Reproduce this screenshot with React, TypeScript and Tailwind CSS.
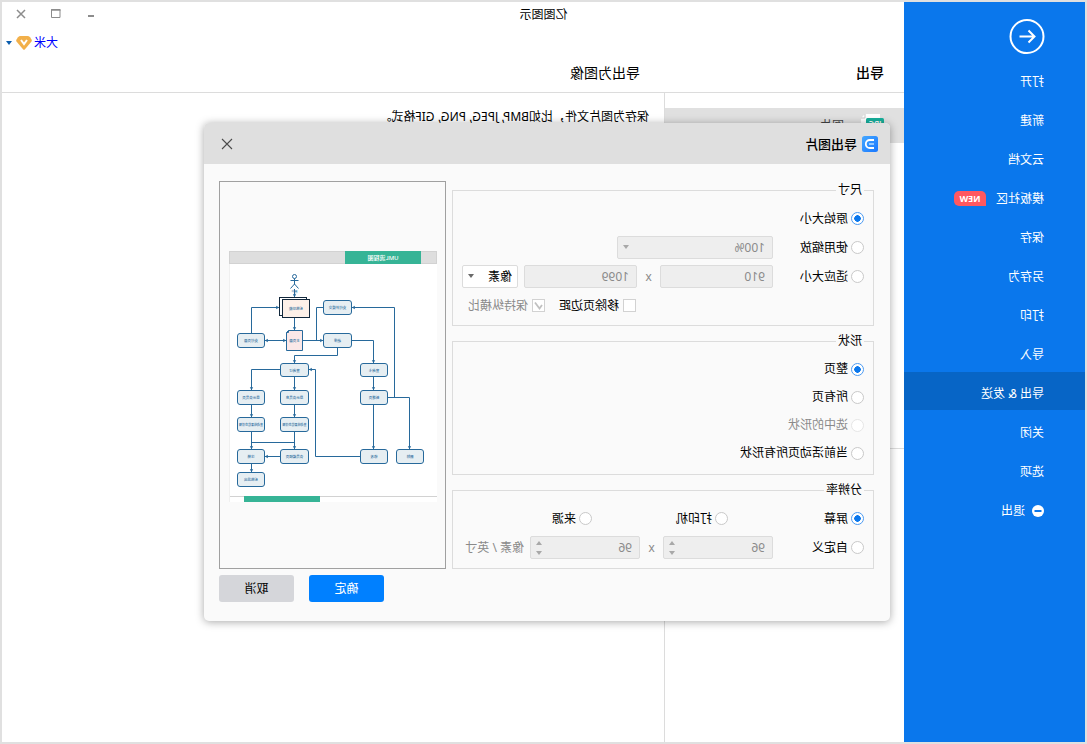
import type { ReactNode } from 'react'

type NavItem = { label: string; active?: boolean; badge?: string; exit?: boolean }

const navItems: NavItem[] = [
  { label: '打开' },
  { label: '新建' },
  { label: '云文档' },
  { label: '模板社区', badge: 'NEW' },
  { label: '保存' },
  { label: '另存为' },
  { label: '打印' },
  { label: '导入' },
  { label: '导出 & 发送', active: true },
  { label: '关闭' },
  { label: '选项' },
  { label: '退出', exit: true },
]

function Sidebar() {
  return (
    <nav className="w-[181px] shrink-0 bg-[#0a77ec] text-white">
      <button type="button" aria-label="返回" className="mt-[17px] ml-10 block size-9">
        <svg viewBox="0 0 36 36" className="size-9" fill="none" stroke="#fff" strokeWidth="2">
          <circle cx="18" cy="17.500" r="16.500" />
          <path d="M25.500 17.500H10.500M16.500 11.500l-6 6 6 6" />
        </svg>
      </button>
      <ul className="mt-[5px]">
        {navItems.map((item) => (
          <li key={item.label} className="h-[39px]">
            <a
              href="#"
              className={`flex h-[38px] items-center pt-[5px] pl-[41px] leading-4 ${item.active ? 'bg-[#0765c6]' : ''}`}
            >
              {item.exit && (
                <svg viewBox="0 0 12 12" className="mr-[7px] size-3">
                  <circle cx="6" cy="6" r="6" fill="#fff" />
                  <path d="M2.500 6h7" stroke="#0a77ec" strokeWidth="2" />
                </svg>
              )}
              {item.label}
              {item.badge && (
                <span className="ml-[10px] flex h-[15px] w-8 items-center justify-center rounded-[5px] rounded-bl-none bg-[#ff5860] text-[9px] font-bold">
                  {item.badge}
                </span>
              )}
            </a>
          </li>
        ))}
      </ul>
    </nav>
  )
}

function Caret({ className }: { className: string }) {
  return (
    <svg viewBox="0 0 6 4" className={`h-1 w-1.5 ${className}`}>
      <path d="M0 0h6L3 4z" fill="currentColor" />
    </svg>
  )
}

function TitleBar() {
  return (
    <div className="flex h-[26px] items-center">
      <h1 className="flex-1 text-center">亿图图示</h1>
      <div className="flex w-[181px] justify-end gap-[21px] pr-3 text-[#8c8c8c]">
        <button type="button" aria-label="最小化">
          <svg viewBox="0 0 14 14" className="size-3.5">
            <path d="M4 8h6" stroke="currentColor" strokeWidth="2" />
          </svg>
        </button>
        <button type="button" aria-label="最大化">
          <svg viewBox="0 0 14 14" className="size-3.5" fill="none" stroke="currentColor">
            <path d="M3 1.500h8.500v8H3z" />
            <path d="M2.500 2h9.500" strokeWidth="1.500" />
          </svg>
        </button>
        <button type="button" aria-label="关闭窗口">
          <svg viewBox="0 0 14 14" className="size-3.5" fill="none" stroke="currentColor" strokeWidth="1.500">
            <path d="M3 2l8 8M11 2l-8 8" />
          </svg>
        </button>
      </div>
    </div>
  )
}

function Radio({ name, label, checked, disabled }: { name: string; label: string; checked?: boolean; disabled?: boolean }) {
  return (
    <label className={`flex items-center gap-[3px] whitespace-nowrap ${disabled ? 'text-[#8a8a8a]' : ''}`}>
      <input
        type="radio"
        name={name}
        defaultChecked={checked}
        disabled={disabled}
        className="size-[13px] shrink-0 appearance-none rounded-full border border-[#c9c9c9] bg-white checked:border-[#4c9bf2] checked:bg-[radial-gradient(circle,#0a77ec_0_3px,#fff_3.5px)] disabled:border-[#e6e6e6]"
      />
      {label}
    </label>
  )
}

function NumberField({ label, value, className, stepper }: { label: string; value: string; className: string; stepper?: boolean }) {
  return (
    <div className={`relative shrink-0 ${className}`}>
      <input
        type="text"
        aria-label={label}
        defaultValue={value}
        disabled
        className="h-[23px] w-full rounded-[2px] border border-[#dcdcdc] bg-[#eeeeee] px-[7px] text-[#8a8a8a]"
      />
      {stepper && (
        <span className="absolute inset-y-0 right-1.5 flex flex-col justify-center gap-[6px] text-[#a8a8a8]">
          <Caret className="rotate-180" />
          <Caret className="" />
        </span>
      )}
    </div>
  )
}

function Times() {
  return <span className="w-[23px] text-center text-[#8a8a8a]">x</span>
}

function Group({ title, className, children }: { title: string; className: string; children: ReactNode }) {
  return (
    <fieldset className={`border border-[#dcdcdc] px-[9px] pt-[5px] ${className}`}>
      <legend className="h-[18px] px-[2px] leading-[18px]">{title}</legend>
      {children}
    </fieldset>
  )
}

type Node = { x: number; y: number; w: number; h: number; text: string }

const nodes: Node[] = [
  { x: 85.5, y: 49.5, w: 28, h: 14, text: '支付并提交' },
  { x: 172.5, y: 82.5, w: 27, h: 14, text: '支付页面' },
  { x: 85.5, y: 82.5, w: 28, h: 14, text: '选择' },
  { x: 128.5, y: 112.5, w: 28, h: 13, text: '查询订' },
  { x: 49.5, y: 112.5, w: 27, h: 13, text: '查询卡' },
  { x: 172.5, y: 139.5, w: 27, h: 14, text: '显示会员页' },
  { x: 128.5, y: 139.5, w: 28, h: 14, text: '显示会员息' },
  { x: 49.5, y: 139.5, w: 27, h: 14, text: '新增页' },
  { x: 172.5, y: 166.5, w: 27, h: 14, text: '查询结果信息详细' },
  { x: 128.5, y: 166.5, w: 28, h: 14, text: '查询结果信息详细' },
  { x: 172.5, y: 198.5, w: 27, h: 14, text: '注销' },
  { x: 128.5, y: 198.5, w: 28, h: 14, text: '会员编辑页' },
  { x: 49.5, y: 198.5, w: 27, h: 14, text: '修改' },
  { x: 13.5, y: 198.5, w: 27, h: 14, text: '删除' },
  { x: 172.5, y: 221.5, w: 27, h: 14, text: '系统退出' },
]

const arrowHeads: [number, number, number][] = [
  [142.5, 46, 180], [158, 56.5, -90], [142.5, 79, 180], [172, 89.5, 90],
  [151, 89.5, -90], [114, 89.5, -90], [85, 56.5, 90], [63.5, 112, 180],
  [142.5, 112, 180], [128, 118.5, 90], [185.5, 139, 180], [142.5, 139, 180],
  [63.5, 139, 180], [185.5, 166, 180], [142.5, 166, 180], [185.5, 198, 180],
  [142.5, 198, 180], [63.5, 198, 180], [27.5, 198, 180], [172, 205.5, 90],
  [185.5, 221, 180],
]

function Diagram() {
  return (
    <svg viewBox="0 0 208 251" className="w-full" role="img" aria-label="UML流程图" fontSize="3.5" fontWeight="500">
      <rect width="208" height="251" fill="#fff" />
      <rect x=".5" y=".5" width="207" height="12" fill="#dedede" stroke="#d2d2d2" />
      <rect x="16" width="76" height="13" fill="#36b496" />
      <text x="54" y="9" fill="#fff" fontSize="6" fontWeight="500" textAnchor="middle">UML流程图</text>
      <g fill="none" stroke="#27699b">
        <circle cx="142.500" cy="25.500" r="2" />
        <path d="M142.500 27.500v6M138.500 29.500h8M142.500 33l-4 4.500M142.500 33l4 4.500M142.500 38v8" />
        <path d="M185.500 82V56.500H158M142.500 67v12M151 89.500h21M134 89.500h-20M120.500 89.500v-33h-7" />
        <path d="M85.500 56.500h-43v90H76M49.500 146.500h-22v52M85.500 89.500h-22V112M63.500 125v14M63.500 153v45" />
        <path d="M99.500 97v7.500h43v8M156.500 118.500h29V139M142.500 125v14M142.500 153v13M142.500 180v18" />
        <path d="M185.500 153v13M185.500 180v18M185.500 212v9M142.500 191.500h43M156.500 205.500h16M128.500 118.500h-7v87h-45" />
      </g>
      {arrowHeads.map(([x, y, angle], i) => (
        <path key={i} d="M0 0l1.700 2.800h-3.400z" fill="#27699b" transform={`translate(${x} ${y}) rotate(${angle})`} />
      ))}
      <text x="142.500" y="41.500" fill="#27699b" textAnchor="middle" fontSize="3">用户</text>
      <rect x="130.500" y="46.500" width="27" height="18" fill="#fff" stroke="#12283c" />
      <rect x="127.500" y="48.500" width="27" height="18" fill="#fdf0e8" stroke="#12283c" />
      <path d="M134.500 79.500h14l2 2v18h-16z" fill="#fbe8e8" stroke="#27699b" />
      <path d="M148.500 79.500v2h2" fill="none" stroke="#27699b" />
      <g fill="#27699b" textAnchor="middle">
        <text x="141" y="59">系统功能</text>
        <text x="142.500" y="91">主页面</text>
      </g>
      {nodes.map((n) => (
        <g key={`${n.x}-${n.y}`}>
          <rect x={n.x} y={n.y} width={n.w} height={n.h} rx="2.500" fill="#e6eef2" stroke="#27699b" />
          <text x={n.x + n.w / 2} y={n.y + n.h / 2 + 1.5} fill="#27699b" textAnchor="middle" fontSize={n.text.length > 6 ? 3 : 3.5}>
            {n.text}
          </text>
        </g>
      ))}
      <path d="M0 245.500h208" stroke="#d2d2d2" />
      <path d="M207.500 13v238" stroke="#f0f0f0" />
      <rect x="117" y="245" width="76" height="6" fill="#36b496" />
    </svg>
  )
}

const checkboxClass =
  'size-[13px] shrink-0 appearance-none border border-[#d2d2d2] bg-white'

function ExportDialog() {
  return (
    <section
      role="dialog"
      aria-label="导出图片"
      className="w-[686px] rounded-[5px] bg-[#fafafa] pb-[19px] shadow-[0_1px_8px_rgba(0,0,0,0.35)]"
    >
      <header className="flex h-[41px] items-center rounded-t-[5px] bg-[#dfdfdf] pr-[17px] pl-3">
        <svg viewBox="0 0 16 16" className="size-4">
          <defs>
            <linearGradient id="logo" x1="1" y1="0" x2="0" y2="1">
              <stop offset="0" stopColor="#45a8ff" />
              <stop offset="1" stopColor="#1a78ff" />
            </linearGradient>
          </defs>
          <rect width="16" height="16" rx="2.500" fill="url(#logo)" />
          <path d="M4 4h4.200a4 4 0 0 1 0 8H4" fill="none" stroke="#fff" strokeWidth="1.800" />
          <path d="M4 8h5" stroke="#b9dcff" strokeWidth="1.500" />
        </svg>
        <h2 className="ml-[5px] flex-1 text-[13px] font-medium">导出图片</h2>
        <button type="button" aria-label="关闭" className="size-3">
          <svg viewBox="0 0 12 12" className="size-3" fill="none" stroke="#4a4a4a" strokeWidth="1.100">
            <path d="M1 1l10 10M11 1L1 11" />
          </svg>
        </button>
      </header>

      <form className="pt-[17px] pr-[15px] pl-4">
        <div className="flex gap-[6px]">
          <div className="flex w-[422px] flex-col gap-[6px]">
            <Group title="尺寸" className="pb-[5px]">
              <div className="flex h-[29px] items-center">
                <Radio name="size" label="原始大小" checked />
              </div>
              <div className="flex h-[29px] items-center">
                <div className="w-[91px]">
                  <Radio name="size" label="使用缩放" />
                </div>
                <div className="relative w-[156px]">
                  <select
                    aria-label="缩放比例"
                    disabled
                    className="h-[23px] w-full appearance-none rounded-[2px] border border-[#dcdcdc] bg-[#eeeeee] px-[7px] text-[#8a8a8a] opacity-100"
                  >
                    <option>100%</option>
                  </select>
                  <Caret className="absolute top-[9px] right-1.5 text-[#a8a8a8]" />
                </div>
              </div>
              <div className="flex h-[29px] items-center">
                <div className="w-[91px]">
                  <Radio name="size" label="适应大小" />
                </div>
                <NumberField label="宽度" value="910" className="w-[113px]" />
                <Times />
                <NumberField label="高度" value="1099" className="w-[113px]" />
                <div className="relative ml-[6px] w-14">
                  <select
                    aria-label="单位"
                    className="h-[23px] w-full appearance-none rounded-[2px] border border-[#dcdcdc] bg-white px-[5px]"
                  >
                    <option>像素</option>
                  </select>
                  <Caret className="pointer-events-none absolute top-[9px] right-1.5 text-[#6a6a6a]" />
                </div>
              </div>
              <div className="flex h-[29px] items-center pl-[228px]">
                <label className="flex items-center gap-[4px]">
                  <input type="checkbox" className={checkboxClass} />
                  移除页边距
                </label>
                <label className="ml-[14px] flex items-center gap-[4px] text-[#8a8a8a]">
                  <span className="relative flex">
                    <input type="checkbox" defaultChecked disabled className={checkboxClass} />
                    <svg viewBox="0 0 13 13" className="absolute inset-0 size-[13px]" fill="none" stroke="#c0c0c0" strokeWidth="1.800">
                      <path d="M3 6l2.500 3.500L10 3.500" />
                    </svg>
                  </span>
                  保持纵横比
                </label>
              </div>
            </Group>

            <Group title="形状" className="pb-[7px]">
              <div className="flex h-7 items-center">
                <Radio name="shape" label="整页" checked />
              </div>
              <div className="flex h-7 items-center">
                <Radio name="shape" label="所有页" />
              </div>
              <div className="flex h-7 items-center">
                <Radio name="shape" label="选中的形状" disabled />
              </div>
              <div className="flex h-7 items-center">
                <Radio name="shape" label="当前活动页所有形状" />
              </div>
            </Group>

            <Group title="分辨率" className="pb-[6px]">
              <div className="flex h-[29px] items-center">
                <div className="w-[136px]">
                  <Radio name="dpi" label="屏幕" checked />
                </div>
                <div className="w-[136px]">
                  <Radio name="dpi" label="打印机" />
                </div>
                <Radio name="dpi" label="来源" />
              </div>
              <div className="flex h-[29px] items-center">
                <div className="w-[91px]">
                  <Radio name="dpi" label="自定义" />
                </div>
                <NumberField label="水平分辨率" value="96" className="w-[110px]" stepper />
                <Times />
                <NumberField label="垂直分辨率" value="96" className="w-[110px]" stepper />
                <span className="ml-[6px] whitespace-nowrap text-[#8a8a8a]">像素 / 英寸</span>
              </div>
            </Group>
          </div>

          <div className="flex flex-1 items-center border border-[#a0a0a0] pt-[2px] pr-[9px] pl-2">
            <Diagram />
          </div>
        </div>

        <div className="mt-[6px] flex justify-end gap-[15px]">
          <button type="button" className="h-[27px] w-[75px] rounded-[3px] bg-[#0080ff] text-white">
            确定
          </button>
          <button type="button" className="h-[27px] w-[75px] rounded-[3px] bg-[#d5d6da]">
            取消
          </button>
        </div>
      </form>
    </section>
  )
}

export default function App() {
  return (
    <div className="relative flex min-h-screen -scale-x-100 border-2 border-[#e0e0e0] bg-white font-['Noto_Sans','Noto_Sans_CJK_SC',sans-serif] text-[12px] leading-4 text-black">
      <Sidebar />
      <main className="flex flex-1 flex-col">
        <TitleBar />
        <div className="flex h-[29px] items-center justify-end pr-1">
          <a href="#" className="text-[#0000ff]">大米</a>
          <svg viewBox="0 0 16 14" className="ml-[2px] h-3.5 w-4">
            <path d="M4.500 0h7Q13 0 14 1.200L15.500 3.500Q16.200 4.700 15.300 5.800L9 13.300Q8 14.400 7 13.300L.7 5.800Q-.2 4.700 .5 3.500L2 1.200Q3 0 4.500 0z" fill="#f2b04a" />
            <path d="M5 4L8 8l3-4" fill="none" stroke="#fff" strokeWidth="2" />
          </svg>
          <Caret className="ml-1 text-[#0a5cad]" />
        </div>
        <div className="flex h-9 items-center border-b border-[#dcdcdc] pb-1 pl-5 text-[14px]">
          <h2 className="w-[244px] font-medium">导出</h2>
          <h2>导出为图像</h2>
        </div>
        <div className="flex flex-1">
          <aside className="w-[240px] border-r border-[#dcdcdc] pt-[15px]">
            <div className="h-[341px] border-b border-[#dcdcdc]">
              <a href="#" className="flex h-[35px] items-center bg-[#e0e0e0] pl-5 text-[#444444]">
                <svg viewBox="0 0 24 24" className="size-6">
                  <path d="M4 0h15l4 4v20H4z" fill="#fff" />
                  <path d="M19 0v4h4" fill="none" stroke="#c8c8c8" />
                  <rect y="4" width="18" height="11" rx="1.500" fill="#18b09c" />
                  <text x="9" y="12.500" fill="#fff" fontSize="8" fontWeight="600" textAnchor="middle">JPG</text>
                </svg>
                <span className="ml-4">图片</span>
              </a>
            </div>
          </aside>
          <p className="pt-4 pl-[15px]">保存为图片文件，比如BMP, JPEG, PNG, GIF格式。</p>
        </div>
      </main>

      <div className="absolute inset-0 flex items-center justify-center pr-[7px]">
        <ExportDialog />
      </div>
    </div>
  )
}
